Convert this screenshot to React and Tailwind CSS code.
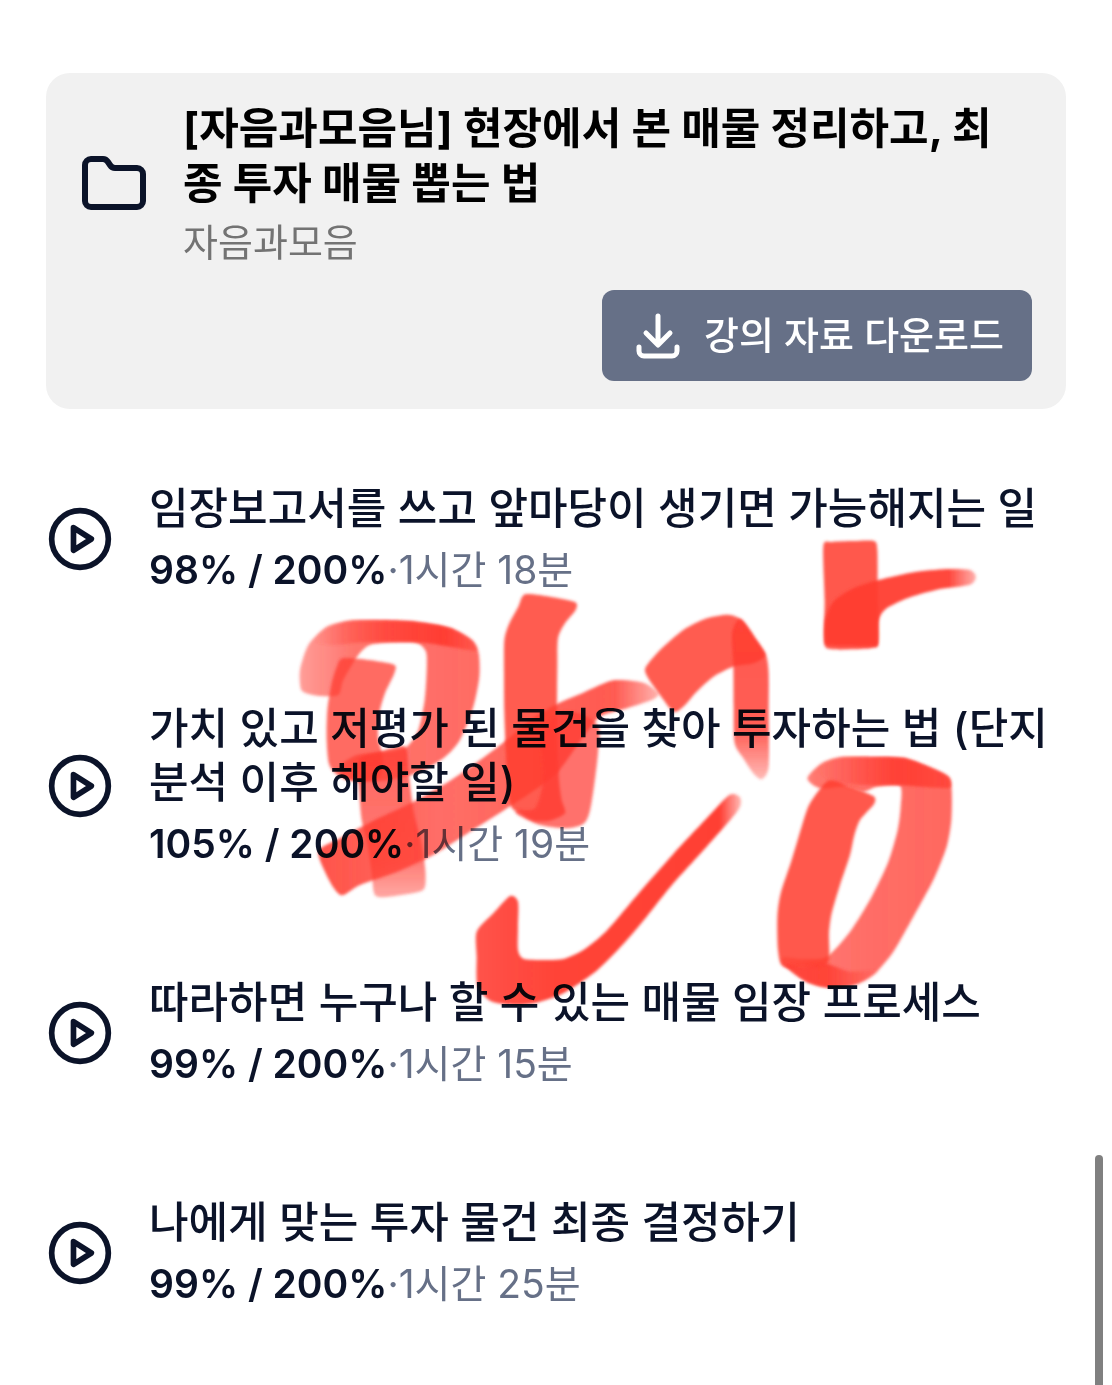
const lessons = [
    { id: 1, title: '임장보고서를 쓰고 앞마당이 생기면 가능해지는 일', progress: 98, length: '1시간 18분' },
    { id: 2, title: '가치 있고 저평가 된 물건을 찾아 투자하는 법 (단지 분석 이후 해야할 일)', progress: 105, length: '1시간 19분' },
    { id: 3, title: '따라하면 누구나 할 수 있는 매물 임장 프로세스', progress: 99, length: '1시간 15분' },
    { id: 4, title: '나에게 맞는 투자 물건 최종 결정하기', progress: 99, length: '1시간 25분' },
];

// Closed smooth outline through a list of points
const outline = (pts) => {
    const n = pts.length;
    const at = (i) => pts[(i + n) % n];
    let d = `M${at(0)[0]} ${at(0)[1]}`;
    for (let i = 0; i < n; i++) {
        const [a, b, c, e] = [at(i - 1), at(i), at(i + 1), at(i + 2)];
        d += `C${b[0] + (c[0] - a[0]) / 8} ${b[1] + (c[1] - a[1]) / 8} ${c[0] - (e[0] - b[0]) / 8} ${c[1] - (e[1] - b[1]) / 8} ${c[0]} ${c[1]}`;
    }
    return d + 'Z';
};

// Marker strokes, each group in its own coordinates at three units per pixel
const marker = [
    {
        origin: 'translate(290 580) scale(0.33333)',
        strokes: [
            { fill: 'url(#fadeLoop)', pts: [[32, 325], [30, 270], [55, 195], [110, 140], [180, 122], [280, 121], [380, 126], [480, 144], [545, 180], [566, 220], [568, 290], [550, 380], [510, 480], [460, 535], [380, 580], [280, 602], [170, 600], [150, 560], [200, 525], [290, 515], [350, 500], [385, 450], [404, 360], [410, 270], [408, 215], [380, 189], [310, 187], [240, 195], [205, 225], [160, 300], [145, 345], [90, 348], [45, 338]] },
            { fill: 'url(#fadeTop)', pts: [[70, 185], [110, 145], [180, 122], [280, 121], [380, 126], [480, 144], [545, 180], [560, 212], [480, 200], [400, 188], [300, 186], [200, 188], [130, 195]] },
            { opacity: 0.76, pts: [[158, 235], [235, 240], [312, 254], [313, 280], [285, 340], [268, 400], [264, 470], [278, 530], [270, 590], [215, 604], [150, 590], [118, 555], [110, 480], [112, 390], [125, 310], [140, 262]] },
            { fill: 'url(#fadeStem)', pts: [[205, 540], [270, 515], [345, 500], [356, 580], [372, 700], [395, 790], [406, 870], [405, 920], [385, 936], [290, 951], [254, 944], [245, 880], [232, 790], [215, 720], [208, 640]] },
            { fill: 'url(#fadeSweep)', pts: [[85, 815], [150, 775], [250, 722], [370, 665], [480, 602], [570, 540], [650, 480], [720, 420], [800, 372], [880, 338], [970, 301], [1060, 308], [1105, 340], [1085, 360], [1000, 388], [930, 410], [880, 470], [800, 580], [720, 640], [640, 692], [540, 755], [430, 825], [320, 876], [210, 915], [155, 946], [120, 905]] },
            { opacity: 0.84, pts: [[705, 43], [780, 50], [855, 66], [857, 90], [825, 130], [804, 175], [802, 260], [801, 400], [803, 520], [808, 610], [815, 660], [825, 700], [780, 722], [730, 722], [690, 700], [662, 675], [650, 560], [643, 400], [642, 280], [643, 180], [658, 130], [685, 80]] },
            { opacity: 0.72, pts: [[755, 480], [800, 400], [870, 400], [926, 440], [924, 520], [912, 620], [898, 700], [880, 732], [830, 745], [750, 735], [685, 705], [680, 690], [735, 685], [760, 600]] },
        ],
    },
    {
        origin: 'translate(440 580) scale(0.33333)',
        strokes: [
            { opacity: 0.84, pts: [[617, 262], [660, 210], [730, 150], [800, 115], [865, 104], [905, 120], [940, 170], [975, 225], [940, 250], [880, 260], [820, 290], [770, 335], [730, 380], [700, 395], [660, 345], [622, 290]] },
            { fill: 'url(#fadeLeg)', pts: [[876, 160], [895, 118], [915, 130], [950, 180], [978, 225], [986, 280], [986, 400], [986, 560], [965, 598], [940, 580], [910, 535], [884, 490], [881, 380], [880, 260]] },
            { fill: 'url(#fadeTick)', pts: [[210, 948], [234, 965], [234, 1040], [234, 1110], [250, 1136], [310, 1140], [370, 1137], [430, 1110], [500, 1052], [600, 935], [700, 822], [800, 715], [868, 645], [900, 652], [895, 690], [800, 800], [700, 910], [620, 1010], [550, 1092], [470, 1172], [370, 1240], [290, 1268], [220, 1275], [150, 1262], [112, 1215], [110, 1130], [110, 1055], [160, 1000]] },
        ],
    },
    {
        origin: 'translate(750 520) scale(0.33333)',
        strokes: [
            { opacity: 0.86, pts: [[220, 78], [245, 66], [310, 63], [372, 63], [382, 90], [383, 200], [385, 365], [370, 383], [310, 388], [250, 388], [223, 372], [224, 240]] },
            { fill: 'url(#fadeTwig)', pts: [[226, 300], [250, 245], [310, 205], [385, 180], [500, 155], [600, 147], [660, 150], [678, 170], [660, 194], [570, 207], [480, 232], [410, 265], [386, 300], [384, 365], [370, 378], [240, 376], [225, 360]] },
            { fill: 'url(#fadeRing)', pts: [[172, 775], [215, 730], [270, 712], [360, 711], [460, 714], [530, 738], [595, 770], [605, 810], [604, 900], [590, 980], [550, 1080], [490, 1190], [430, 1295], [370, 1365], [310, 1396], [240, 1403], [170, 1385], [100, 1335], [100, 1312], [160, 1318], [230, 1310], [300, 1235], [365, 1130], [415, 1025], [443, 930], [452, 860], [450, 797], [380, 800], [340, 815], [280, 800], [210, 805]] },
            { fill: 'url(#fadeRingTop)', pts: [[200, 750], [230, 728], [270, 712], [360, 711], [460, 714], [530, 738], [595, 770], [598, 803], [520, 801], [450, 796], [350, 795], [250, 785]] },
            { opacity: 0.86, pts: [[235, 782], [300, 800], [370, 828], [372, 852], [330, 900], [312, 950], [300, 1005], [270, 1095], [245, 1180], [237, 1240], [238, 1310], [225, 1335], [160, 1345], [98, 1338], [84, 1290], [82, 1190], [92, 1120], [125, 1020], [155, 920], [180, 850]] },
            { fill: 'url(#fadeRingBase)', pts: [[105, 1335], [160, 1340], [225, 1330], [300, 1355], [390, 1350], [360, 1370], [310, 1396], [240, 1403], [170, 1385]] },
        ],
    },
];

const fades = [
    { id: 'fadeLoop', x2: 1, y2: 0, stops: [[0, 0.5], [0.3, 0.7], [1, 0.76]] },
    { id: 'fadeTop', x2: 1, y2: 0, stops: [[0, 0], [0.45, 0.75], [0.8, 0.95], [1, 0.4]] },
    { id: 'fadeStem', x2: 0, y2: 1, stops: [[0, 0.78], [0.75, 0.68], [1, 0.45]] },
    { id: 'fadeSweep', x2: 1, y2: 0, stops: [[0, 0.88], [0.35, 0.74], [0.87, 0.84], [1, 0.4]] },
    { id: 'fadeLeg', x2: 0, y2: 1, stops: [[0, 0.84], [0.7, 0.82], [1, 0.35]] },
    { id: 'fadeTick', x2: 1, y2: 0, stops: [[0, 0.88], [0.3, 0.96], [0.92, 0.98], [1, 0.35]] },
    { id: 'fadeTwig', x2: 1, y2: 0, stops: [[0, 0.95], [0.82, 0.94], [1, 0.4]] },
    { id: 'fadeRing', x2: 1, y2: 0, stops: [[0, 0.45], [0.2, 0.7], [0.5, 0.74], [1, 0.78]] },
    { id: 'fadeRingTop', x2: 1, y2: 0, stops: [[0, 0], [0.6, 0.9], [1, 0.7]] },
    { id: 'fadeRingBase', x2: 1, y2: 0, stops: [[0, 0.9], [0.45, 0.85], [1, 0]] },
];

function MarkerNote() {
    return (
        <svg
            className="pointer-events-none absolute left-0 top-0 w-full mix-blend-multiply"
            viewBox="0 0 1112 1385"
            aria-hidden="true"
        >
            <defs>
                <filter id="soft" x="-5%" y="-5%" width="110%" height="110%">
                    <feGaussianBlur stdDeviation="4" />
                </filter>
                {fades.map(f => (
                    <linearGradient key={f.id} id={f.id} x1="0" y1="0" x2={f.x2} y2={f.y2}>
                        {f.stops.map(([offset, opacity]) => (
                            <stop key={offset} offset={offset} stopColor="#ff3b30" stopOpacity={opacity} />
                        ))}
                    </linearGradient>
                ))}
            </defs>
            {marker.map(group => (
                <g key={group.origin} transform={group.origin}>
                    {group.strokes.map((s, i) => (
                        <path
                            key={i}
                            d={outline(s.pts)}
                            fill={s.fill || '#ff3b30'}
                            fillOpacity={s.opacity || 1}
                            filter="url(#soft)"
                        />
                    ))}
                </g>
            ))}
        </svg>
    );
}

function FolderIcon() {
    return (
        <svg className="h-14 w-16 shrink-0" viewBox="0 0 64 56" fill="none" stroke="#0b1329" strokeWidth="6" strokeLinejoin="round" aria-hidden="true">
            <path d="M3 10a6 6 0 0 1 6-6h12q3 0 5 3l2 3q2 3 5 3h22a6 6 0 0 1 6 6v27a6 6 0 0 1-6 6H9a6 6 0 0 1-6-6z" />
        </svg>
    );
}

function DownloadIcon() {
    return (
        <svg className="h-12 w-11 shrink-0" viewBox="0 0 44 48" fill="none" stroke="currentColor" strokeWidth="5" strokeLinecap="round" strokeLinejoin="round" aria-hidden="true">
            <path d="M22 4v27M10 21l12 12 12-12M3 35v4a5 5 0 0 0 5 5h28a5 5 0 0 0 5-5v-4" />
        </svg>
    );
}

function PlayIcon() {
    return (
        <svg className="h-[68px] w-[68px]" viewBox="0 0 24 24" fill="none" stroke="currentColor" strokeWidth="2" strokeLinejoin="round" aria-hidden="true">
            <circle cx="12" cy="12" r="10" />
            <path d="M9.7 8l6.3 4-6.3 4z" />
        </svg>
    );
}

export default function App() {
    return (
        <div lang="ko" className="relative min-h-screen bg-white px-[46px] pb-[72px] pt-[73px] font-['Inter','Noto_Sans_CJK_KR',sans-serif] text-[#0b1329]">
            {/* Course card */}
            <section className="rounded-3xl bg-[#f1f1f1] pb-7 pl-9 pr-[34px] pt-7">
                <div className="flex items-center gap-[37px] pr-2">
                    <FolderIcon />
                    <div>
                        <h1 className="text-[43px] font-bold leading-[55px] text-black">
                            [자음과모음님] 현장에서 본 매물 정리하고, 최종 투자 매물 뽑는 법
                        </h1>
                        <p className="mt-2 text-[38px] leading-[46px] text-[#737373]">자음과모음</p>
                    </div>
                </div>
                <div className="mt-[25px] flex justify-end">
                    <button className="flex h-[91px] items-center gap-6 rounded-xl bg-[#667087] pl-[34px] pr-7 text-[38px] font-medium text-white">
                        <DownloadIcon />
                        강의 자료 다운로드
                    </button>
                </div>
            </section>

            {/* Lessons */}
            <ul className="mt-[72px] flex flex-col gap-[104px]">
                {lessons.map(lesson => (
                    <li key={lesson.id} className="flex items-center gap-[35px]">
                        <button className="shrink-0" aria-label={`${lesson.title} 재생`}>
                            <PlayIcon />
                        </button>
                        <div>
                            <h2 className="text-[43px] font-medium leading-[54px]">{lesson.title}</h2>
                            <p className="mt-2 text-[39px] leading-[54px]">
                                <span className="font-semibold">{lesson.progress}% / 200%</span>
                                <span className="text-[#667087]">·{lesson.length}</span>
                            </p>
                        </div>
                    </li>
                ))}
            </ul>

            <MarkerNote />

            {/* Scroll thumb */}
            <div className="absolute bottom-0 right-[9px] top-[1155px] w-2 rounded-t-full bg-[#808080]" />
        </div>
    );
}
